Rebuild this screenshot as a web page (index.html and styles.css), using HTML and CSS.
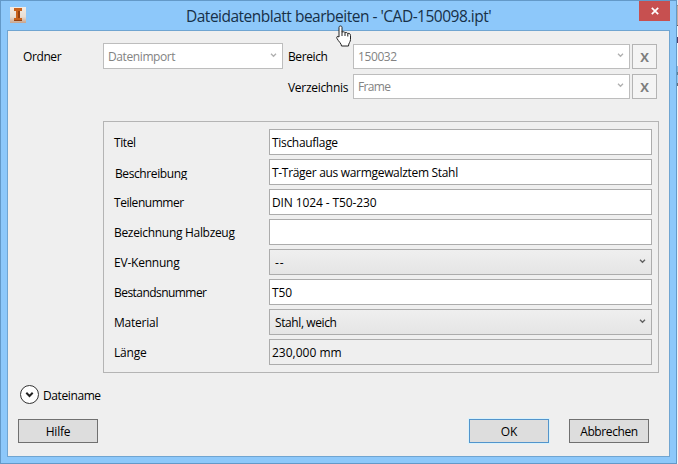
FILE: index.html
```html
<!DOCTYPE html>
<html lang="de">
<head>
<meta charset="utf-8">
<title>Dateidatenblatt bearbeiten</title>
<link rel="stylesheet" href="styles.css">
</head>
<body>
<div class="window">
  <header class="titlebar">
    <svg class="app-icon" width="16" height="16" viewBox="0 0 16 16">
      <defs><linearGradient id="tile" x1="0" y1="0" x2="0" y2="1"><stop offset="0" stop-color="#f3ece4"/><stop offset=".6" stop-color="#e9ddd2"/><stop offset="1" stop-color="#c9a48c"/></linearGradient></defs>
      <rect width="16" height="16" fill="url(#tile)"/>
      <path d="M4 1h8v3h-2v7h2v3H4v-3h2V4H4z" fill="#c8611b"/>
      <path d="M8 4h2v7H8zM4 13h8v1H4z" fill="#94400f"/>
    </svg>
    <h1 class="title"><span class="t-title">Dateidatenblatt bearbeiten - 'CAD-150098.ipt'</span></h1>
    <button class="close" aria-label="Schließen"><svg width="8" height="8" viewBox="0 0 8 8"><path d="M.8.8l6.4 6.4M7.2.8L.8 7.2" stroke="#fff" stroke-width="1.7"/></svg></button>
  </header>
  <main class="client">
    <section class="location">
      <span class="label ordner">Ordner</span>
      <div class="combo off folder"><span class="t-import">Datenimport</span><svg class="chev" width="7" height="5" viewBox="0 0 7 5"><path d="M1 .7l2.5 2.6L6 .7"/></svg></div>
      <span class="label t-bereich">Bereich</span>
      <div class="combo off"><span class="t-num">150032</span><svg class="chev" width="7" height="5" viewBox="0 0 7 5"><path d="M1 .7l2.5 2.6L6 .7"/></svg></div>
      <button class="clear"><span>X</span></button>
      <span class="label verz t-verz">Verzeichnis</span>
      <div class="combo off"><span class="t-frame">Frame</span><svg class="chev" width="7" height="5" viewBox="0 0 7 5"><path d="M1 .7l2.5 2.6L6 .7"/></svg></div>
      <button class="clear"><span>X</span></button>
    </section>
    <section class="group">
      <span class="label t-titel">Titel</span><div class="field"><span class="t-tisch">Tischauflage</span></div>
      <span class="label clipped"><span class="t-beschr">Beschreibung</span></span><div class="field"><span class="t-traeger">T-Träger aus warmgewalztem Stahl</span></div>
      <span class="label t-teile">Teilenummer</span><div class="field"><span class="t-din">DIN 1024 - T50-230</span></div>
      <span class="label t-halb">Bezeichnung Halbzeug</span><div class="field"></div>
      <span class="label t-ev">EV-Kennung</span><div class="combo"><span class="t-dash">--</span><svg class="chev" width="7" height="5" viewBox="0 0 7 5"><path d="M1 .7l2.5 2.6L6 .7"/></svg></div>
      <span class="label t-best">Bestandsnummer</span><div class="field"><span class="t-t50">T50</span></div>
      <span class="label t-mat">Material</span><div class="combo"><span class="t-stahl">Stahl, weich</span><svg class="chev" width="7" height="5" viewBox="0 0 7 5"><path d="M1 .7l2.5 2.6L6 .7"/></svg></div>
      <span class="label t-lang">Länge</span><div class="field readonly"><span class="t-mm">230,000 mm</span></div>
    </section>
    <div class="expander">
      <svg width="20" height="20" viewBox="0 0 20 20"><circle cx="9.5" cy="9.5" r="9" fill="#fff" stroke="#333"/><path d="M6.3 7.8l3.2 3.2 3.2-3.2" fill="none" stroke="#222" stroke-width="2"/></svg>
      <span class="t-datei">Dateiname</span>
    </div>
    <footer class="actions">
      <button class="btn"><span class="t-hilfe">Hilfe</span></button>
      <button class="btn primary"><span class="t-ok">OK</span></button>
      <button class="btn"><span class="t-abbr">Abbrechen</span></button>
    </footer>
  </main>
</div>
<aside class="behind"></aside>
<svg class="cursor" width="18" height="23" viewBox="0 0 18 23">
  <path d="M5.5 1c1 0 1.500.6 1.500 1.500V7c2-.6 2.700.1 3 .7 1.300-.5 2.300 0 2.700.8 1.700-.4 2.800.4 2.800 2v4c0 2.500-2 3.500-2 6.500H6.500c0-2.500-3-4.500-4.500-7.500-.9-1.800.5-2.700 2-1.500V2.500C4 1.600 4.500 1 5.500 1z" fill="#fff" stroke="#222" stroke-linejoin="round"/>
  <path d="M7 6.500V11M10 7.800V11M12.800 8.800V11.500" stroke="#222" fill="none"/>
</svg>
</body>
</html>
```
FILE: styles.css
```css
* { box-sizing: border-box; }
body {
  margin: 0;
  width: 678px;
  height: 464px;
  display: flex;
  overflow: hidden;
  font: 12px/16px "Open Sans", "Noto Sans", sans-serif;
  letter-spacing: -0.4px;
  color: #000;
}
span { white-space: nowrap; }
button { font: inherit; letter-spacing: inherit; color: inherit; padding: 0; border-radius: 0; }
.window {
  width: 677px;
  height: 464px;
  padding: 0 6px;
  border: 1px solid #6399c8;
  background: #8dc8fa;
}
.titlebar { height: 29px; display: flex; align-items: flex-start; }
.app-icon { margin: 6px 0 0 3px; flex: none; }
.title {
  flex: 1;
  margin: 4px 0 0 160px;
  font-size: 15.5px;
  line-height: 22px;
  font-weight: 400;
  letter-spacing: -0.5px;
  color: #173048;
}
.close {
  width: 31px;
  height: 20px;
  border: 0;
  background: #c75050;
  display: flex;
  align-items: center;
  justify-content: center;
}
.client {
  height: 427px;
  border: 1px solid #70a5d1;
  background: #efefef;
  padding: 12px 10px 0;
}
.location {
  display: grid;
  grid-template-columns: 85px 180px 70px 277px 25px;
  grid-template-rows: 26px 25px;
  row-gap: 5px;
  align-items: end;
  width: 640px;
}
.label, .combo, .field { padding-top: 2px; }
.location .label { align-self: center; }
.ordner { padding-left: 5px; }
.t-bereich, .t-verz { padding-left: 5px; }
.t-verz { letter-spacing: -0.3px; }
.verz { grid-column: 3; }
.combo, .field {
  display: flex;
  align-items: center;
  height: 26px;
  border: 1px solid #acacac;
}
.combo {
  justify-content: space-between;
  padding: 2px 5px 0;
  background: linear-gradient(#efefef, #e5e5e5);
}
.combo.off { height: 25px; padding: 1px 5px 0 4px; background: #fff; border-color: #bdbdbd; color: #838383; }
.combo.folder { height: 26px; padding-top: 2px; }
.chev { fill: none; stroke: #606060; stroke-width: 1.3; margin-bottom: 4px; }
.off .chev { stroke: #b0b0b0; }
.clear {
  width: 25px;
  height: 25px;
  margin-left: 2px;
  border: 1px solid #b4b4b4;
  background: #f4f4f4;
  color: #7d7d7d;
  font-size: 13px;
  font-weight: 700;
  letter-spacing: 0;
}
.field { background: #fff; padding-left: 2px; }
.field.readonly { background: #efefef; }
.group {
  width: 556px;
  height: 252px;
  margin: 22px 0 0 85px;
  padding: 7px 6px 0 10px;
  border: 1px solid #b4b4b4;
  display: grid;
  grid-template-columns: 155px 383px;
  grid-auto-rows: 26px;
  row-gap: 4px;
  align-items: center;
}
.clipped { height: 14px; overflow: hidden; margin: 2px 0 0 1px; padding-top: 0; }
.t-best { letter-spacing: -0.55px; }
.t-teile { letter-spacing: -0.45px; }
.t-halb, .t-tisch, .t-traeger { letter-spacing: -0.31px; }
.t-ev, .t-mat, .t-lang { letter-spacing: -0.22px; }
.t-din, .t-t50 { letter-spacing: -0.12px; }
.t-mm { letter-spacing: 0; }
.t-dash { letter-spacing: 0.8px; }
.t-frame { letter-spacing: -0.65px; }
.t-hilfe, .t-ok { letter-spacing: -0.2px; }
.expander { display: flex; align-items: center; gap: 3px; margin: 12px 0 0 2px; height: 20px; }
.t-datei { padding-top: 1px; }
.actions { display: flex; margin-top: 14px; }
.btn { width: 80px; height: 24px; border: 1px solid #707070; background: #ddd; padding-top: 2px; }
.btn.primary { margin: 0 20px 0 371px; border-color: #5394cb; box-shadow: 0 0 0 1px #d9f2fc; }
.behind {
  width: 1px;
  background: linear-gradient(#dfe9f1 5px, #a08a80 5px 6px, #c5aca0 6px 25px, #6d5a58 25px 26px, #eef3f8 26px 37px, #55406a 37px 43px, #eef3f8 43px 66px, #8cb9dc 66px 72px, #5f7f90 72px 75px, #9cc9ea 75px 83px, #66717a 83px 86px, #f1f5f8 86px);
}
.cursor { position: absolute; left: 335px; top: 25px; }
```
